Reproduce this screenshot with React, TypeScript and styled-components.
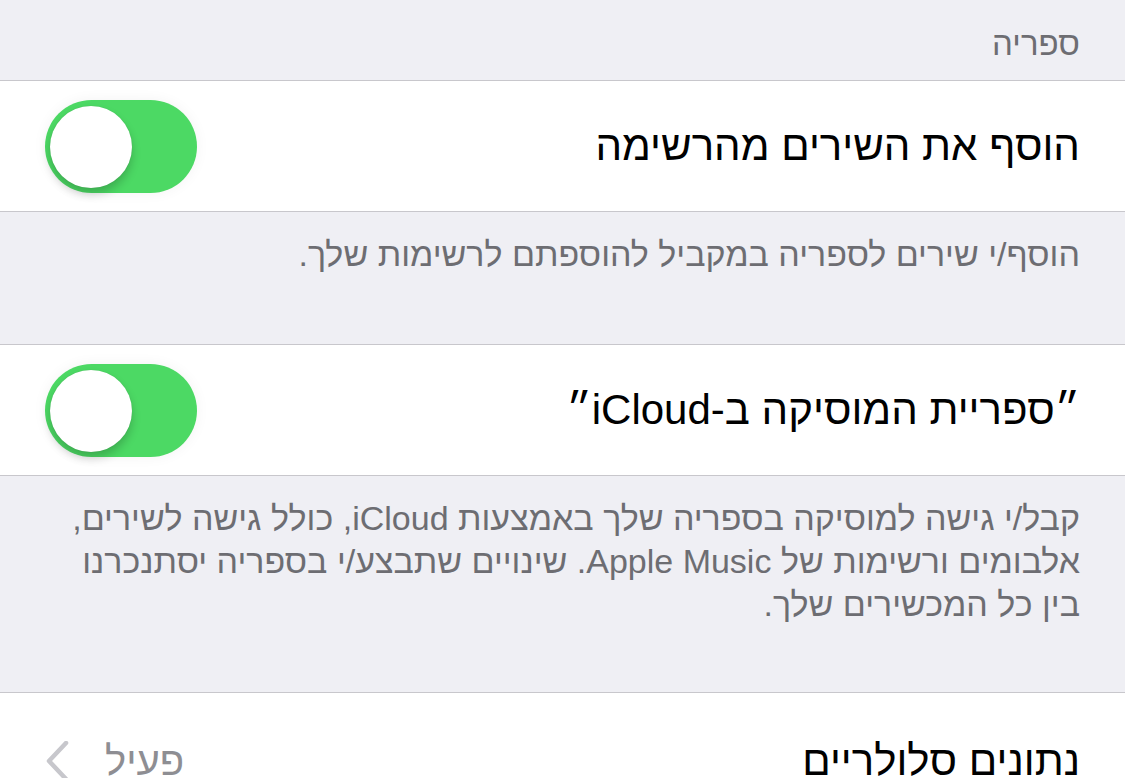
import React, { FC } from 'react'
import styled, { createGlobalStyle } from 'styled-components'

const GlobalStyle = createGlobalStyle`
    html, body {
        margin: 0;
        padding: 0;
        background: #efeff4;
    }
    body {
        font-family: "Liberation Sans", "DejaVu Sans", sans-serif;
        -webkit-font-smoothing: antialiased;
    }
`

const Page = styled.div`
    direction: rtl;
    width: 1125px;
    height: 778px;
    overflow: hidden;
    background: #efeff4;
`

const SectionHeader = styled.div`
    height: 81px;
    box-sizing: border-box;
    padding: 25px 45px 0 45px;
    font-size: 33px;
    color: #6d6d72;
    border-bottom: 1px solid #c8c7cc;
`

const Cell = styled.div`
    height: 131px;
    box-sizing: border-box;
    background: #fff;
    display: flex;
    align-items: center;
    justify-content: space-between;
    padding: 0 45px;
    border-bottom: 1px solid #c8c7cc;
`

const CellTitle = styled.span`
    font-size: 42px;
    color: #000;
`

const Footer = styled.div<{ $height: number }>`
    height: ${p => p.$height}px;
    box-sizing: border-box;
    padding: 21px 45px 0 40px;
    font-size: 34px;
    line-height: 43px;
    color: #6d6d72;
    border-bottom: 1px solid #c8c7cc;
`

const Track = styled.div`
    width: 152px;
    height: 93px;
    border-radius: 47px;
    background: #4cd964;
    position: relative;
    box-shadow: 0 0 14px rgba(0, 0, 0, 0.05);
`

const Knob = styled.div`
    position: absolute;
    left: 5px;
    top: 6px;
    width: 82px;
    height: 82px;
    border-radius: 50%;
    background: #fff;
    box-shadow: 0 6px 10px rgba(0, 0, 0, 0.2), 0 0 1px rgba(0, 0, 0, 0.15);
`

const Detail = styled.div`
    display: flex;
    align-items: center;
    gap: 36px;
    font-size: 40px;
    color: #8e8e93;
`

const LastCell = styled(Cell)`
    padding-top: 6px;
`

const Switch: FC = () => (
    <Track>
        <Knob />
    </Track>
)

const Chevron: FC = () => (
    <svg width="24" height="40" viewBox="0 0 24 40">
        <path d="M21 2 L4 20 L21 38" fill="none" stroke="#c7c7cc" strokeWidth="4.5" strokeLinecap="round" strokeLinejoin="round" />
    </svg>
)

const App: FC = () => {
    return (
        <Page>
            <GlobalStyle />
            <SectionHeader>ספריה</SectionHeader>
            <Cell>
                <CellTitle>הוסף את השירים מהרשימה</CellTitle>
                <Switch />
            </Cell>
            <Footer $height={133}>הוסף/י שירים לספריה במקביל להוספתם לרשימות שלך.</Footer>
            <Cell>
                <CellTitle>״ספריית המוסיקה ב-iCloud״</CellTitle>
                <Switch />
            </Cell>
            <Footer $height={217}>
                קבל/י גישה למוסיקה בספריה שלך באמצעות iCloud, כולל גישה לשירים, אלבומים ורשימות של Apple Music. שינויים שתבצע/י בספריה יסתנכרנו בין כל המכשירים שלך.
            </Footer>
            <LastCell>
                <CellTitle>נתונים סלולריים</CellTitle>
                <Detail>
                    פעיל
                    <Chevron />
                </Detail>
            </LastCell>
        </Page>
    )
}

export default App
